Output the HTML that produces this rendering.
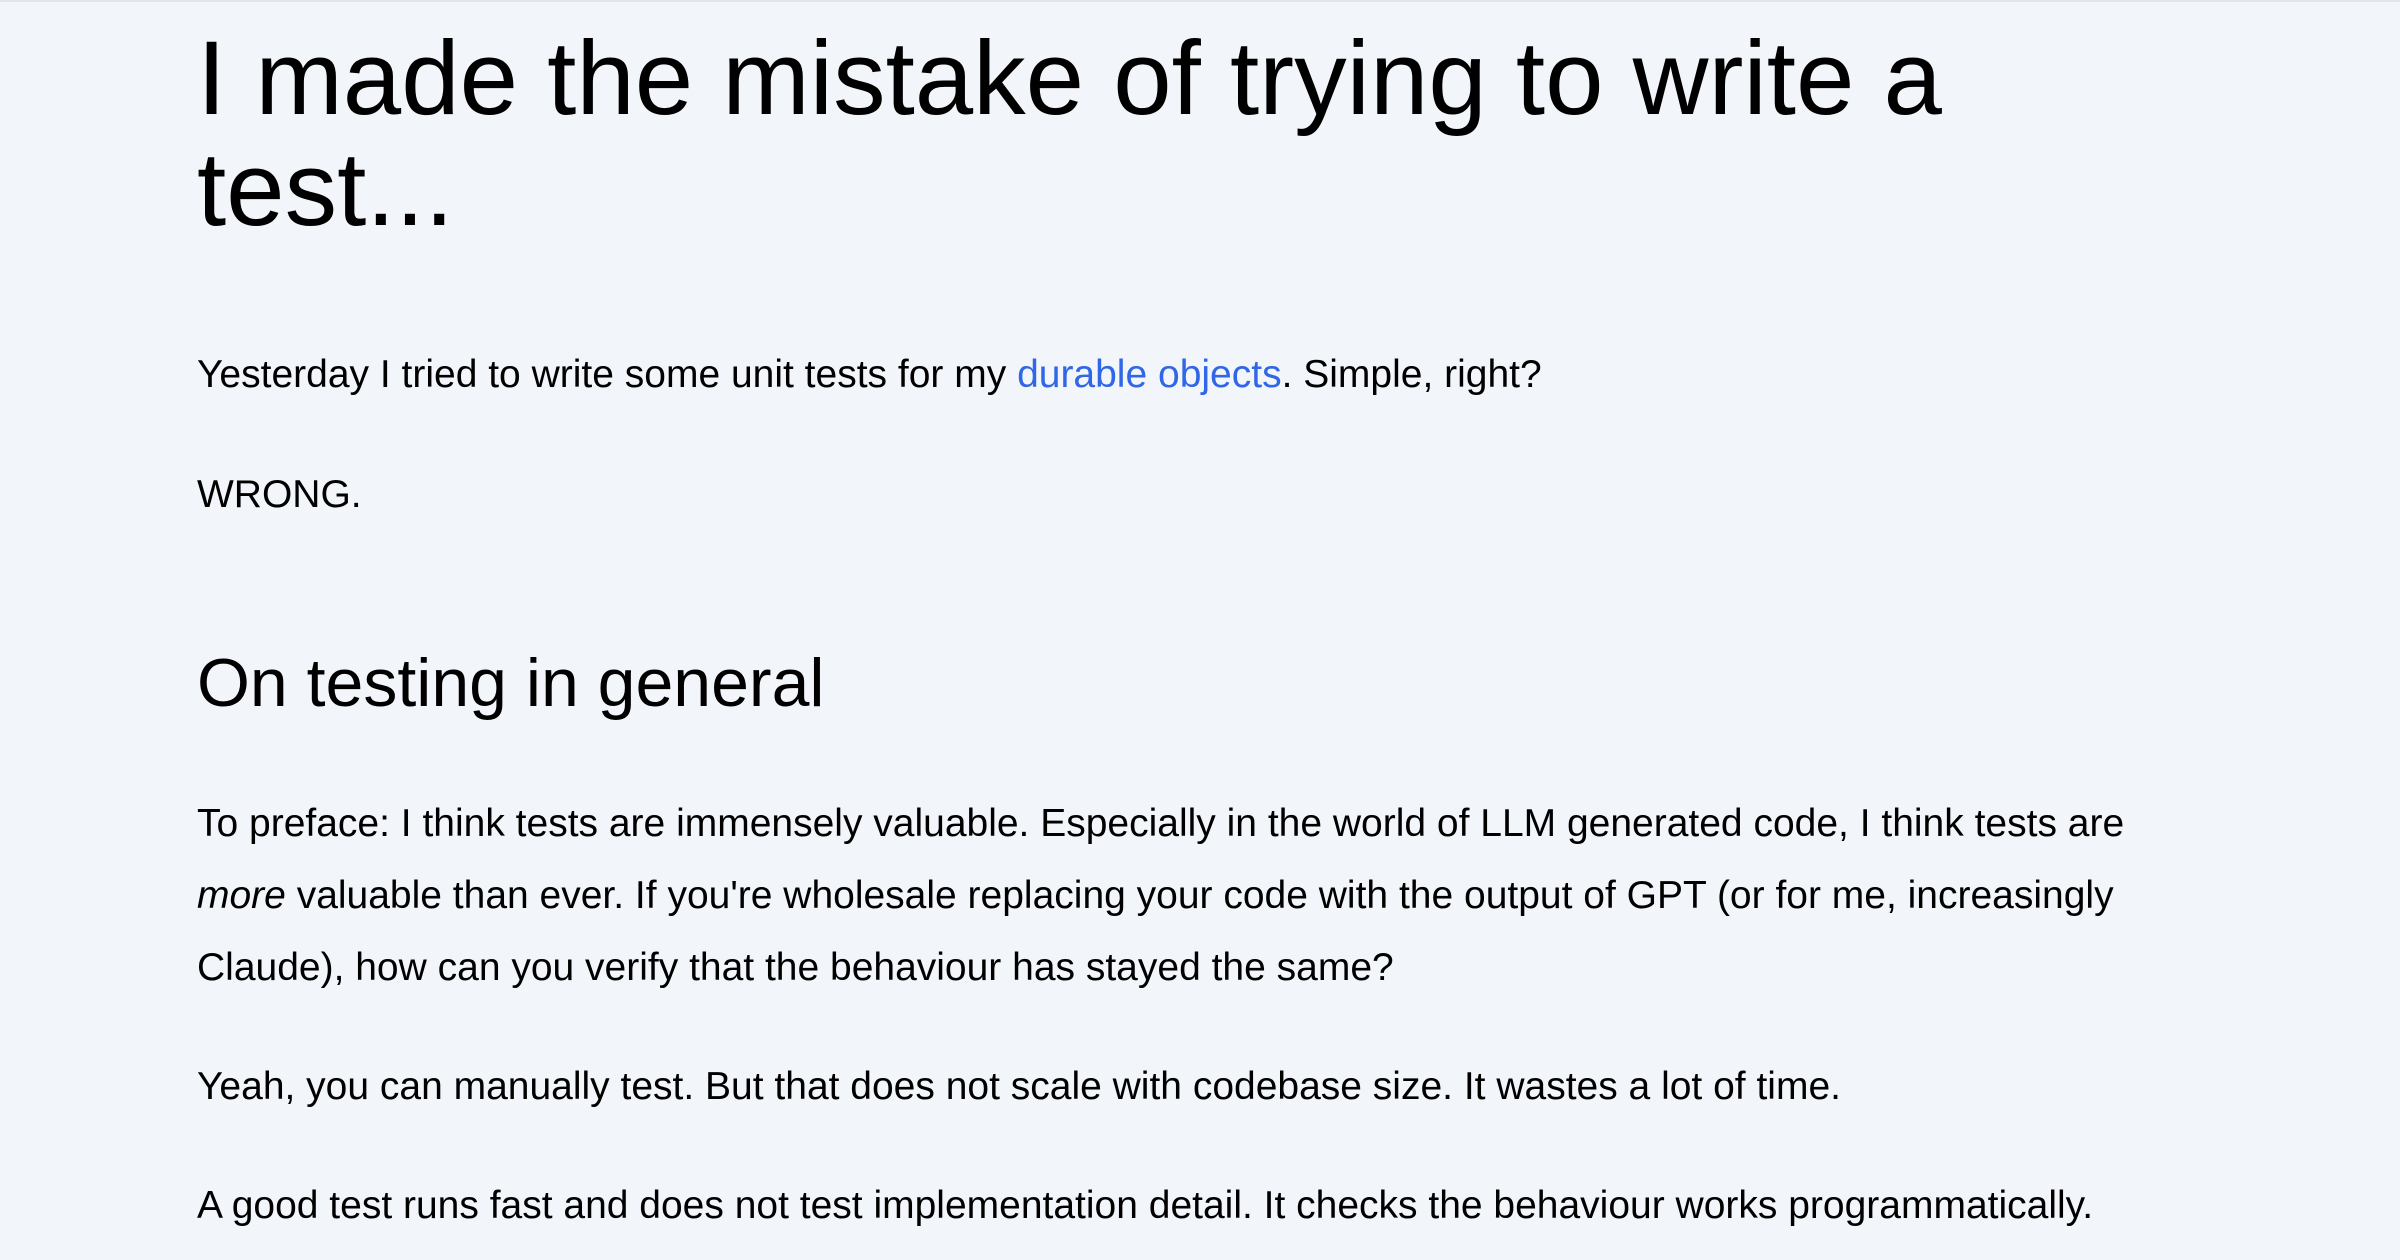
<!DOCTYPE html>
<html><head><meta charset="utf-8"><style>
html,body{margin:0;padding:0;}
body{width:2400px;height:1260px;background:#f2f5fa;overflow:hidden;position:relative;font-family:"Liberation Sans",sans-serif;color:#000;border-top:2px solid #e3e4e6;box-sizing:border-box;}
.b{position:absolute;left:197px;margin:0;white-space:nowrap;}
h1.b{font-size:105px;line-height:111px;font-weight:400;top:21px;}
h2.b{font-size:68px;line-height:80px;font-weight:400;top:641px;}
p.b{font-size:39px;line-height:72px;}
a{color:#2f67e6;text-decoration:none;}
</style></head><body>
<h1 class="b">I made the mistake of trying to write a<br>test...</h1>
<p class="b" style="top:337px">Yesterday I tried to write some unit tests for my <a>durable objects</a>. Simple, right?</p>
<p class="b" style="top:457px">WRONG.</p>
<h2 class="b">On testing in general</h2>
<p class="b" style="top:786px">To preface: I think tests are immensely valuable. Especially in the world of LLM generated code, I think tests are<br><i>more</i> valuable than ever. If you're wholesale replacing your code with the output of GPT (or for me, increasingly<br>Claude), how can you verify that the behaviour has stayed the same?</p>
<p class="b" style="top:1049px">Yeah, you can manually test. But that does not scale with codebase size. It wastes a lot of time.</p>
<p class="b" style="top:1168px">A good test runs fast and does not test implementation detail. It checks the behaviour works programmatically.</p>
</body></html>
